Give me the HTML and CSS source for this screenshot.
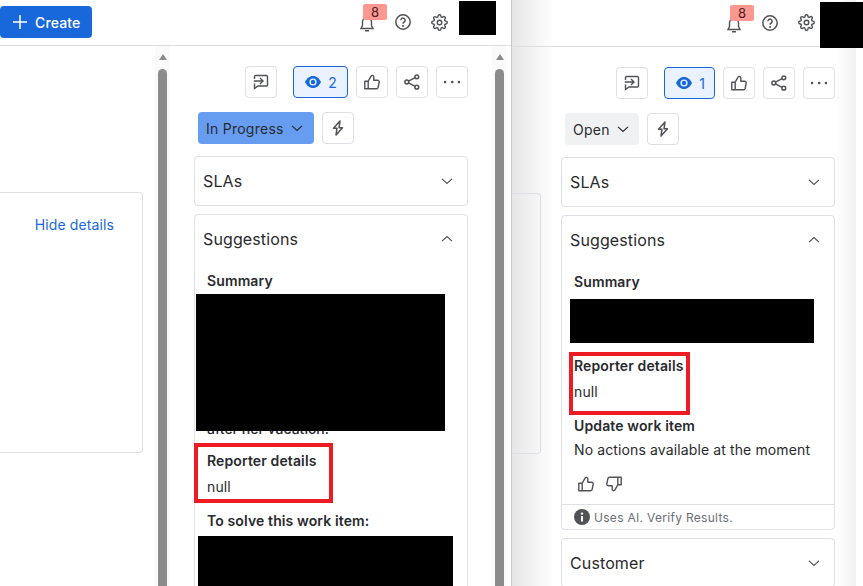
FILE: index.html
```html
<!DOCTYPE html>
<html lang="en">
<head>
  <meta charset="UTF-8">
  <title>Work item comparison</title>
  <link rel="stylesheet" href="styles.css">
</head>
<body>

  <svg class="sprite" xmlns="http://www.w3.org/2000/svg">
    <symbol id="i-plus" viewBox="0 0 16 16"><path d="M8 1v14M1 8h14" fill="none" stroke="currentColor" stroke-width="1.5"/></symbol>
    <symbol id="i-bell" viewBox="0 0 16 16"><path d="M8 1.5A4.5 4.5 0 0 0 3.5 6v3.5L2 12.5h12l-1.5-3V6A4.5 4.5 0 0 0 8 1.5zM6 14.7h4" fill="none" stroke="currentColor" stroke-width="1.4"/></symbol>
    <symbol id="i-help" viewBox="0 0 16 16"><circle cx="8" cy="8" r="7.2" fill="none" stroke="currentColor" stroke-width="1.5"/><path d="M5.9 6.2a2.1 2.1 0 1 1 3.2 1.8c-.7.4-1.1.9-1.1 1.7" fill="none" stroke="currentColor" stroke-width="1.5"/><circle cx="8" cy="12" r="1" fill="currentColor"/></symbol>
    <symbol id="i-gear" viewBox="0 0 24 24"><g fill="none" stroke="currentColor" stroke-width="2"><circle cx="12" cy="12" r="3.2"/><path d="M19.4 15a1.65 1.65 0 0 0 .33 1.82l.06.06a2 2 0 0 1 0 2.83 2 2 0 0 1-2.83 0l-.06-.06a1.65 1.65 0 0 0-1.82-.33 1.65 1.65 0 0 0-1 1.51V21a2 2 0 0 1-2 2 2 2 0 0 1-2-2v-.09A1.65 1.65 0 0 0 9 19.4a1.65 1.65 0 0 0-1.82.33l-.06.06a2 2 0 0 1-2.83 0 2 2 0 0 1 0-2.83l.06-.06a1.65 1.65 0 0 0 .33-1.82 1.65 1.65 0 0 0-1.51-1H3a2 2 0 0 1-2-2 2 2 0 0 1 2-2h.09A1.65 1.65 0 0 0 4.6 9a1.65 1.65 0 0 0-.33-1.82l-.06-.06a2 2 0 0 1 0-2.83 2 2 0 0 1 2.83 0l.06.06a1.65 1.65 0 0 0 1.82.33H9a1.65 1.65 0 0 0 1-1.51V3a2 2 0 0 1 2-2 2 2 0 0 1 2 2v.09a1.65 1.65 0 0 0 1 1.51 1.65 1.65 0 0 0 1.82-.33l.06-.06a2 2 0 0 1 2.83 0 2 2 0 0 1 0 2.83l-.06.06a1.65 1.65 0 0 0-.33 1.82V9a1.65 1.65 0 0 0 1.51 1H21a2 2 0 0 1 2 2 2 2 0 0 1-2 2h-.09a1.65 1.65 0 0 0-1.51 1z"/></g></symbol>
    <symbol id="i-forward" viewBox="0 0 16 16"><path d="M1.5 5V2.5a1 1 0 0 1 1-1h11a1 1 0 0 1 1 1v8.5a1 1 0 0 1-1 1H5l-3.5 2.5V9.5M.8 7H10M7 4l3 3-3 3" fill="none" stroke="currentColor" stroke-width="1.4"/></symbol>
    <symbol id="i-eye" viewBox="0 0 16 16"><path d="M8 2C4.4 2 1.6 4.6 0 8c1.6 3.4 4.4 6 8 6s6.4-2.6 8-6c-1.6-3.4-4.4-6-8-6z" fill="currentColor"/><circle cx="8" cy="8" r="3.6" fill="#e9f2fe"/><circle cx="8" cy="8" r="2.2" fill="currentColor"/></symbol>
    <symbol id="i-like" viewBox="0 0 16 16"><path d="M.8 7.2h3.4v7.6H.8zM4.2 7.2 7.4 1.6c1.1-.6 2.4.1 2.4 1.5v3.2h3.9c1 0 1.7.9 1.5 1.8l-1.1 5.4c-.2.8-.8 1.3-1.6 1.3H4.2" fill="none" stroke="currentColor" stroke-width="1.4" stroke-linejoin="round"/></symbol>
    <symbol id="i-share" viewBox="0 0 16 16"><g fill="none" stroke="currentColor" stroke-width="1.5"><circle cx="2.8" cy="8" r="1.9"/><circle cx="12.8" cy="2.8" r="1.9"/><circle cx="12.8" cy="13.2" r="1.9"/><path d="M4.5 7.1l6.6-3.4M4.5 8.9l6.6 3.4"/></g></symbol>
    <symbol id="i-more" viewBox="0 0 16 16"><g fill="currentColor"><circle cx="1" cy="8" r="1.35"/><circle cx="8.2" cy="8" r="1.35"/><circle cx="15" cy="8" r="1.35"/></g></symbol>
    <symbol id="i-bolt" viewBox="0 0 16 16"><path d="M10 1 3.5 8.2H7L6 15l6.5-7.2H9z" fill="none" stroke="currentColor" stroke-width="1.5" stroke-linejoin="round"/></symbol>
    <symbol id="i-chevron" viewBox="0 0 16 16"><path d="M3 5.8l5 4.7 5-4.7" fill="none" stroke="currentColor" stroke-width="1.15"/></symbol>
    <symbol id="i-info" viewBox="0 0 16 16"><circle cx="8" cy="8" r="8" fill="currentColor"/><rect x="7" y="7" width="2" height="5.5" fill="#fff"/><circle cx="8" cy="4.6" r="1.2" fill="#fff"/></symbol>
  </svg>

  <!-- left window -->
  <section class="window window-left">
    <header class="topbar">
      <button class="create-btn"><svg class="icon"><use href="#i-plus"/></svg>Create</button>
      <div class="topbar-icons">
        <span class="bell"><svg class="icon"><use href="#i-bell"/></svg><span class="bell-badge">8</span></span>
        <svg class="icon"><use href="#i-help"/></svg>
        <svg class="icon icon-gear"><use href="#i-gear"/></svg>
      </div>
      <div class="redact redact-avatar-left"></div>
    </header>
    <div class="window-body">
      <div class="main-pane">
        <div class="detail-card"><a class="hide-link">Hide details</a></div>
      </div>
      <div class="scrollbar"><span class="scroll-arrow"></span><span class="scroll-thumb"></span></div>
      <aside class="side-pane">
        <div class="toolbar">
          <button class="tool-btn tool-first"><svg class="icon"><use href="#i-forward"/></svg></button>
          <button class="tool-btn watch-btn"><svg class="icon"><use href="#i-eye"/></svg>2</button>
          <button class="tool-btn"><svg class="icon"><use href="#i-like"/></svg></button>
          <button class="tool-btn"><svg class="icon"><use href="#i-share"/></svg></button>
          <button class="tool-btn"><svg class="icon"><use href="#i-more"/></svg></button>
        </div>
        <div class="status-row">
          <button class="status-btn status-progress">In Progress<svg class="icon"><use href="#i-chevron"/></svg></button>
          <button class="tool-btn"><svg class="icon"><use href="#i-bolt"/></svg></button>
        </div>
        <div class="panel">
          <div class="panel-head">SLAs<svg class="icon"><use href="#i-chevron"/></svg></div>
        </div>
        <div class="panel">
          <div class="panel-head">Suggestions<svg class="icon flip"><use href="#i-chevron"/></svg></div>
          <div class="suggest">
            <div class="suggest-title">Summary</div>
            <div class="summary-text"><div class="redact redact-summary-left"></div>after her vacation:</div>
            <div class="suggest-block reporter-left">
              <div class="suggest-title">Reporter details</div>
              <div class="suggest-value">null</div>
              <div class="callout callout-left"></div>
            </div>
            <div class="suggest-title">To solve this work item:</div>
            <div class="redact redact-solve"></div>
          </div>
        </div>
      </aside>
      <div class="scrollbar"><span class="scroll-arrow"></span><span class="scroll-thumb"></span></div>
    </div>
  </section>

  <!-- right window -->
  <section class="window window-right">
    <header class="topbar">
      <div class="topbar-icons">
        <span class="bell"><svg class="icon"><use href="#i-bell"/></svg><span class="bell-badge">8</span></span>
        <svg class="icon"><use href="#i-help"/></svg>
        <svg class="icon icon-gear"><use href="#i-gear"/></svg>
      </div>
      <div class="redact redact-avatar-right"></div>
    </header>
    <div class="window-body">
      <div class="main-pane main-pane-right">
        <div class="detail-card"></div>
      </div>
      <aside class="side-pane side-pane-right">
        <div class="toolbar">
          <button class="tool-btn tool-first"><svg class="icon"><use href="#i-forward"/></svg></button>
          <button class="tool-btn watch-btn"><svg class="icon"><use href="#i-eye"/></svg>1</button>
          <button class="tool-btn"><svg class="icon"><use href="#i-like"/></svg></button>
          <button class="tool-btn"><svg class="icon"><use href="#i-share"/></svg></button>
          <button class="tool-btn"><svg class="icon"><use href="#i-more"/></svg></button>
        </div>
        <div class="status-row">
          <button class="status-btn status-open">Open<svg class="icon"><use href="#i-chevron"/></svg></button>
          <button class="tool-btn"><svg class="icon"><use href="#i-bolt"/></svg></button>
        </div>
        <div class="panel">
          <div class="panel-head">SLAs<svg class="icon"><use href="#i-chevron"/></svg></div>
        </div>
        <div class="panel">
          <div class="panel-head">Suggestions<svg class="icon flip"><use href="#i-chevron"/></svg></div>
          <div class="suggest suggest-right">
            <div class="suggest-title">Summary</div>
            <div class="redact redact-summary-right"></div>
            <div class="suggest-block reporter-right">
              <div class="suggest-title">Reporter details</div>
              <div class="suggest-value">null</div>
              <div class="callout callout-right"></div>
            </div>
            <div class="suggest-title">Update work item</div>
            <div class="suggest-note">No actions available at the moment</div>
            <div class="feedback">
              <svg class="icon"><use href="#i-like"/></svg>
              <svg class="icon flip-both"><use href="#i-like"/></svg>
            </div>
          </div>
          <div class="ai-note"><svg class="icon"><use href="#i-info"/></svg>Uses AI. Verify Results.</div>
        </div>
        <div class="panel">
          <div class="panel-head">Customer<svg class="icon"><use href="#i-chevron"/></svg></div>
        </div>
      </aside>
    </div>
  </section>

</body>
</html>
```

FILE: styles.css
```css
* {
  box-sizing: border-box;
}
html, body {
  height: 586px;
  overflow: hidden;
}
body {
  font-family: Inter, "Noto Sans", sans-serif;
  font-size: 14px;
  letter-spacing: 0.12px;
  color: #292a2e;
  background: #fff;
  margin: 0;
  display: flex;
}
button {
  font: inherit;
  letter-spacing: inherit;
  color: inherit;
  cursor: pointer;
}
.sprite {
  display: none;
}
.icon {
  width: 16px;
  height: 16px;
  flex: none;
  display: block;
}
.flip {
  transform: scaleY(-1);
}
.flip-both {
  transform: rotate(180deg);
}
.redact {
  background: #000;
}

/* windows */
.window {
  height: 586px;
  overflow: hidden;
}
.window-left {
  width: 512px;
  flex: none;
  border-right: 1px solid #c8c8c8;
}
.window-right {
  flex: 1;
  min-width: 0;
  background: linear-gradient(90deg, #fff 324px, #f1f1f1 344px, #fff 344px);
}
.window-right .window-body,
.window-right .topbar {
  background: linear-gradient(90deg, #e6e6e6 0, rgba(255, 255, 255, 0) 42px);
}
.window-body {
  display: flex;
}

/* top bar */
.topbar {
  height: 46px;
  border-bottom: 1px solid #dddee1;
  display: flex;
  align-items: center;
}
.window-right .topbar {
  height: 47px;
}
.create-btn {
  width: 92px;
  height: 32px;
  margin-top: -1px;
  display: flex;
  align-items: center;
  gap: 7px;
  padding: 0 0 0 12px;
  border: 0;
  border-radius: 4px;
  background: #1868db;
  color: #fff;
  font-weight: 500;
}
.topbar-icons {
  margin-left: auto;
  display: flex;
  align-items: center;
  gap: 20px;
  color: #505258;
}
.topbar-icons .icon {
  margin-top: -1px;
}
.icon-gear {
  width: 17px;
  height: 17px;
}
.bell {
  position: relative;
  display: block;
}
.bell .icon {
  margin-top: 3px;
}
.bell-badge {
  position: absolute;
  left: 4px;
  top: -9px;
  width: 24px;
  height: 16px;
  background: #fd9891;
  border-radius: 2px;
  text-align: center;
  font-size: 13px;
  line-height: 16px;
  color: #4a2320;
}
.redact-avatar-left {
  width: 37px;
  height: 34px;
  margin: 1px 15px 0 11px;
  align-self: flex-start;
}
.redact-avatar-right {
  width: 43px;
  height: 46px;
  margin: 2px 0 0 5px;
  align-self: flex-start;
}

/* main pane and scrollbar */
.main-pane {
  width: 155px;
  padding: 146px 12px 0 0;
  flex: none;
}
.main-pane-right {
  width: 13px;
  padding-right: 0;
}
.detail-card {
  height: 261px;
  border: 1px solid #dcdfe4;
  border-left: 0;
  border-radius: 0 4px 4px 0;
  padding: 23px 28px 0 0;
  text-align: right;
}
.hide-link {
  color: #1868db;
}
.scrollbar {
  width: 15px;
  flex: none;
  height: 540px;
  background: #fafafa;
  padding: 8px 3px 0;
}
.scroll-arrow {
  display: block;
  width: 0;
  height: 0;
  margin: 0 auto;
  border: 4.5px solid transparent;
  border-top: 0;
  border-bottom: 6px solid #8b8b8b;
}
.scroll-thumb {
  display: block;
  width: 9px;
  height: 520px;
  margin-top: 9px;
  background: #8b8b8b;
  border-radius: 5px 5px 0 0;
}

/* side pane */
.side-pane {
  width: 322px;
  padding: 20px 24px 0;
  flex: none;
}
.side-pane-right {
  width: 310px;
  padding: 20px 0 0 36px;
}
.toolbar {
  display: flex;
  justify-content: flex-end;
  gap: 8px;
}
.tool-btn {
  width: 32px;
  height: 32px;
  padding: 0;
  border: 1px solid #dcdfe4;
  border-radius: 4px;
  background: #fff;
  color: #505258;
  display: flex;
  align-items: center;
  justify-content: center;
}
.tool-first {
  margin-right: 8px;
}
.watch-btn {
  width: auto;
  padding: 0 10px 0 11px;
  gap: 7px;
  background: #e9f2fe;
  border-color: #1868db;
  color: #1868db;
}
.window-right .watch-btn {
  padding-right: 9px;
}
.status-row {
  display: flex;
  gap: 8px;
  margin: 14px 0 12px 4px;
}
.status-btn {
  height: 32px;
  display: flex;
  align-items: center;
  gap: 5px;
  padding: 0 9px 0 8px;
  border: 0;
  border-radius: 4px;
  letter-spacing: 0.25px;
}
.status-progress {
  background: #669df1;
}
.status-open {
  background: #f0f1f2;
  padding-right: 8px;
}
.panel {
  border: 1px solid #dcdfe4;
  border-radius: 4px;
  margin-bottom: 8px;
  background: #fff;
}
.panel-head {
  height: 48px;
  display: flex;
  align-items: center;
  justify-content: space-between;
  padding: 0 12px 0 8px;
  font-size: 16px;
}
.panel-head .icon {
  color: #505258;
}

/* suggestions */
.suggest {
  padding: 8px 0 0 12px;
  height: 400px;
}
.suggest-right {
  height: auto;
}
.suggest-title {
  font-weight: 600;
  line-height: 20px;
}
.suggest-value {
  margin-top: 6px;
  line-height: 20px;
}
.suggest-note {
  margin-top: 4px;
  line-height: 20px;
}
.summary-text {
  position: relative;
  height: 145px;
  margin-top: 3px;
  display: flex;
  align-items: flex-end;
  line-height: 20px;
  font-weight: 500;
  letter-spacing: 0;
  margin-bottom: 12px;
}
.redact-summary-left {
  position: absolute;
  left: -11px;
  top: 0;
  width: 249px;
  height: 137px;
}
.redact-summary-right {
  width: 244px;
  height: 44px;
  margin: 7px 0 13px -4px;
}
.redact-solve {
  width: 255px;
  height: 60px;
  margin: 5px 0 0 -9px;
}
.suggest-block {
  position: relative;
  margin-bottom: 14px;
}
.callout {
  position: absolute;
  border: 4px solid #ed1c24;
}
.callout-left {
  left: -13px;
  top: -8px;
  width: 139px;
  height: 60px;
}
.callout-right {
  left: -5px;
  top: -4px;
  width: 121px;
  height: 63px;
}
.feedback {
  display: flex;
  gap: 12px;
  padding: 16px 0 12px 4px;
  color: #505258;
}
.ai-note {
  height: 25px;
  border-top: 1px solid #dcdfe4;
  display: flex;
  align-items: center;
  gap: 4px;
  padding-left: 12px;
  font-size: 12px;
  letter-spacing: 0.3px;
  color: #6b6e76;
}
.ai-note .icon {
  color: #505258;
}
```
